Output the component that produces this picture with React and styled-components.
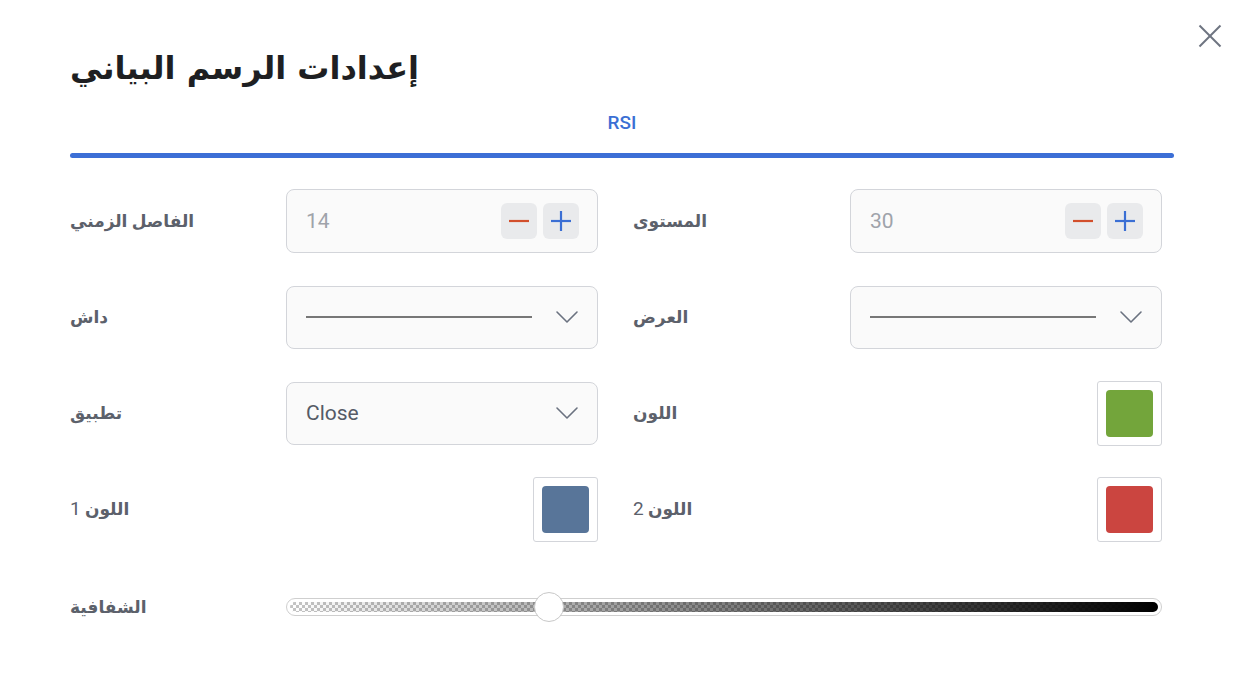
import React from "react";
import styled, { createGlobalStyle } from "styled-components";

const Global = createGlobalStyle`
  html, body { margin: 0; padding: 0; background: #fff; }
  body { font-family: Roboto, "DejaVu Sans", sans-serif; }
  * { box-sizing: border-box; }
`;

const Page = styled.div`
  position: relative;
  width: 1246px;
  height: 696px;
  padding: 40px 72px 0 70px;
  background: #fff;
`;

const CloseButton = styled.button`
  position: absolute;
  top: 24px;
  right: 24px;
  width: 24px;
  height: 24px;
  padding: 0;
  border: 0;
  background: transparent;
  display: flex;
  align-items: center;
  justify-content: center;
`;

const Title = styled.h1`
  margin: 0;
  font-family: "DejaVu Sans", sans-serif;
  font-size: 32px;
  font-weight: 700;
  line-height: 56px;
  color: #1e1f22;
  direction: rtl;
  text-align: left;
`;

const Tabs = styled.div`
  margin-top: 15px;
  display: flex;
`;

const Tab = styled.div`
  flex: 1;
  display: flex;
  flex-direction: column;
  align-items: center;
`;

const TabLabel = styled.span`
  font-family: Roboto, sans-serif;
  font-size: 19px;
  font-weight: 500;
  color: ${(p) => (p.$active ? "#3b6fd4" : "#6b7280")};
  line-height: 24px;
`;

const TabBar = styled.div`
  margin-top: 18px;
  align-self: stretch;
  height: 5px;
  border-radius: 3px;
  background: ${(p) => (p.$active ? "#3c6fd6" : "transparent")};
`;

const Form = styled.div`
  margin-top: 31px;
  width: 1092px;
  display: grid;
  grid-template-columns: 528px 529px;
  column-gap: 35px;
  row-gap: 32px;
`;

const Field = styled.div`
  display: flex;
  align-items: center;
  height: 64px;
  ${(p) => (p.$wide ? "grid-column: 1 / -1; margin-top: 2px;" : "")}
`;

const Label = styled.div`
  flex: 1;
  font-size: 17px;
  font-weight: 700;
  color: #5c616b;
  line-height: 24px;
`;

const Digit = styled.span`
  font-family: Roboto, sans-serif;
  font-size: 19px;
  font-weight: 400;
`;

const Control = styled.div`
  width: ${(p) => (p.$wide ? "876px" : "312px")};
  display: flex;
  justify-content: flex-end;
`;

const Box = styled.div`
  width: 312px;
  height: ${(p) => p.$h || 64}px;
  display: flex;
  align-items: center;
  border: 1px solid #d3d5da;
  border-radius: 8px;
  background: #fafafa;
  padding: 0 18px 0 19px;
`;

const Value = styled.span`
  flex: 1;
  font-family: Roboto, sans-serif;
  font-size: 21px;
  color: ${(p) => (p.$muted ? "#9fa3aa" : "#555b66")};
`;

const Steppers = styled.div`
  display: flex;
  gap: 6px;
`;

const StepButton = styled.button`
  width: 36px;
  height: 36px;
  border: 0;
  padding: 0;
  border-radius: 6px;
  background: #e9eaec;
  display: flex;
  align-items: center;
  justify-content: center;
`;

const LineSample = styled.div`
  width: 226px;
  height: 2px;
  background: #777;
  margin-right: auto;
`;

const Swatch = styled.div`
  width: 65px;
  height: 65px;
  padding: 8px;
  border: 1px solid #d3d5da;
  border-radius: 3px;
  background: #fff;
`;

const SwatchFill = styled.div`
  width: 100%;
  height: 100%;
  border-radius: 4px;
  background: ${(p) => p.$color};
`;

const SliderTrack = styled.div`
  position: relative;
  width: 876px;
  height: 18px;
  border: 1px solid #cfcfcf;
  border-radius: 9px;
  padding: 3px;
  background: #fff;
`;

const SliderFill = styled.div`
  width: 100%;
  height: 100%;
  border-radius: 5px;
  background:
    linear-gradient(to right, rgba(0,0,0,0), rgba(0,0,0,1)),
    repeating-conic-gradient(#c4c4c4 0% 25%, #ffffff 0% 50%) 0 0 / 6px 6px;
`;

const Thumb = styled.div`
  position: absolute;
  top: 50%;
  width: 30px;
  height: 30px;
  margin-top: -15px;
  margin-left: -15px;
  border-radius: 50%;
  background: #fff;
  border: 1px solid #c8c8c8;
`;

const Chevron = () => (
  <svg width="24" height="14" viewBox="0 0 24 14" fill="none">
    <polyline points="2,2 12,12 22,2" stroke="#6b7280" strokeWidth="1.6" strokeLinecap="round" strokeLinejoin="round" />
  </svg>
);

const Minus = () => (
  <svg width="22" height="22" viewBox="0 0 22 22">
    <line x1="1" y1="11" x2="21" y2="11" stroke="#d24f2c" strokeWidth="2.2" />
  </svg>
);

const Plus = () => (
  <svg width="22" height="22" viewBox="0 0 22 22">
    <line x1="1" y1="11" x2="21" y2="11" stroke="#3b6fd4" strokeWidth="2.2" />
    <line x1="11" y1="1" x2="11" y2="21" stroke="#3b6fd4" strokeWidth="2.2" />
  </svg>
);

const NumberField = ({ value }) => (
  <Box>
    <Value $muted>{value}</Value>
    <Steppers>
      <StepButton aria-label="decrease"><Minus /></StepButton>
      <StepButton aria-label="increase"><Plus /></StepButton>
    </Steppers>
  </Box>
);

const LineSelect = () => (
  <Box $h={63}>
    <LineSample />
    <Chevron />
  </Box>
);

const TextSelect = ({ value }) => (
  <Box $h={63}>
    <Value>{value}</Value>
    <Chevron />
  </Box>
);

const ColorField = ({ color }) => (
  <Swatch>
    <SwatchFill $color={color} />
  </Swatch>
);

export default function App() {
  const opacity = 0.3;
  return (
    <>
      <Global />
      <Page>
        <CloseButton aria-label="close">
          <svg width="24" height="24" viewBox="0 0 24 24">
            <line x1="1.5" y1="1.5" x2="22.5" y2="22.5" stroke="#6e7480" strokeWidth="2" />
            <line x1="22.5" y1="1.5" x2="1.5" y2="22.5" stroke="#6e7480" strokeWidth="2" />
          </svg>
        </CloseButton>
        <Title>إعدادات الرسم البياني</Title>
        <Tabs>
          <Tab>
            <TabLabel $active>RSI</TabLabel>
            <TabBar $active />
          </Tab>
        </Tabs>
        <Form>
          <Field>
            <Label>الفاصل الزمني</Label>
            <Control><NumberField value="14" /></Control>
          </Field>
          <Field>
            <Label>المستوى</Label>
            <Control><NumberField value="30" /></Control>
          </Field>
          <Field>
            <Label>داش</Label>
            <Control><LineSelect /></Control>
          </Field>
          <Field>
            <Label>العرض</Label>
            <Control><LineSelect /></Control>
          </Field>
          <Field>
            <Label>تطبيق</Label>
            <Control><TextSelect value="Close" /></Control>
          </Field>
          <Field>
            <Label>اللون</Label>
            <Control><ColorField color="#73a53b" /></Control>
          </Field>
          <Field>
            <Label>اللون <Digit>1</Digit></Label>
            <Control><ColorField color="#587599" /></Control>
          </Field>
          <Field>
            <Label>اللون <Digit>2</Digit></Label>
            <Control><ColorField color="#cb4540" /></Control>
          </Field>
          <Field $wide>
            <Label>الشفافية</Label>
            <Control $wide>
              <SliderTrack>
                <SliderFill />
                <Thumb style={{ left: `${opacity * 100}%` }} />
              </SliderTrack>
            </Control>
          </Field>
        </Form>
      </Page>
    </>
  );
}
